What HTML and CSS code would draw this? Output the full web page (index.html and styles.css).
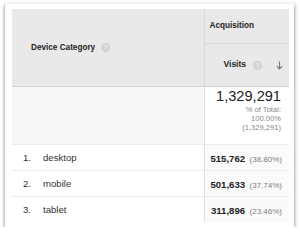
FILE: index.html
```html
<!DOCTYPE html>
<html>
<head>
<meta charset="utf-8">
<link rel="stylesheet" href="styles.css">
</head>
<body>
<div class="card">
  <table class="report">
    <colgroup><col class="c1"><col class="c2"></colgroup>
    <thead>
      <tr class="h1">
        <th class="dim" rowspan="2"><span>Device Category</span><span class="help">?</span></th>
        <th class="group">Acquisition</th>
      </tr>
      <tr class="h2">
        <th class="metric"><span class="mname">Visits</span><span class="help">?</span><svg class="sort" width="7" height="9" viewBox="0 0 7 9"><path d="M3.5 0.5V8M0.8 5.2L3.5 8L6.2 5.2" fill="none" stroke="#777" stroke-width="1.1"/></svg></th>
      </tr>
    </thead>
    <tbody>
      <tr class="total">
        <td class="blank"></td>
        <td class="tval"><div class="big">1,329,291</div><div class="small">% of Total:<br>100.00%<br>(1,329,291)</div></td>
      </tr>
      <tr class="row">
        <td class="name"><span class="idx">1.</span>desktop</td>
        <td class="val"><b>515,762</b> <span class="pct">(38.80%)</span></td>
      </tr>
      <tr class="row">
        <td class="name"><span class="idx">2.</span>mobile</td>
        <td class="val"><b>501,633</b> <span class="pct">(37.74%)</span></td>
      </tr>
      <tr class="row last">
        <td class="name"><span class="idx">3.</span>tablet</td>
        <td class="val"><b>311,896</b> <span class="pct">(23.46%)</span></td>
      </tr>
    </tbody>
  </table>
</div>
</body>
</html>
```
FILE: styles.css
```css
html, body {
  margin: 0;
  padding: 0;
  background: #fff;
}
body {
  font-family: "Liberation Sans", Arial, sans-serif;
  color: #333;
}
.card {
  margin: 3px 0 0 4px;
  width: 278px;
  padding: 5px 4px 5px 7px;
  background: #fff;
  border-left: 1px solid #cfcfcf;
  border-top: 1px solid #f2f2f2;
  box-shadow: 0 3px 3px rgba(0,0,0,0.35), 2px 0 3px rgba(0,0,0,0.12);
}
.report {
  border-collapse: collapse;
  width: 277px;
  table-layout: fixed;
}
.c1 { width: 192px; }
.c2 { width: 85px; }
.report th, .report td {
  padding: 0;
}
.report th {
  background: #e9e9e9;
  font-weight: bold;
  font-size: 8.2px;
  color: #1e1e1e;
  text-align: left;
}
.dim {
  padding-left: 19px !important;
  vertical-align: middle;
  border-right: 1px solid #d8d8d8;
  border-bottom: 1px solid #d4d4d4;
}
.help {
  display: inline-block;
  width: 9px;
  height: 9px;
  border-radius: 50%;
  background: #d2d2d2;
  color: #fff;
  font-size: 6.5px;
  line-height: 9px;
  text-align: center;
  font-weight: normal;
  margin-left: 6px;
  vertical-align: middle;
}
.h1 { height: 34px; }
.h2 { height: 43px; }
.group {
  padding-left: 5px !important;
  border-bottom: 1px solid #d8d8d8;
}
.metric {
  padding-left: 19px !important;
  border-bottom: 1px solid #d4d4d4;
  white-space: nowrap;
}
.mname { font-size: 8.5px; }
.metric .help { margin-left: 7px; }
.sort {
  margin-left: 14px;
  vertical-align: middle;
}
.total { height: 58px; }
.blank {
  background: #f7f7f7;
  border-right: 1px solid #e0e0e0;
  border-bottom: 1px solid #ececec;
}
.tval {
  text-align: right;
  vertical-align: top;
  padding: 1px 8px 0 0 !important;
  border-bottom: 1px solid #ececec;
}
.big {
  font-size: 14.6px;
  line-height: 17px;
  color: #222;
}
.small {
  font-size: 7.6px;
  line-height: 9px;
  color: #888;
}
.row { height: 26px; }
.row td {
  border-bottom: 1px solid #ececec;
  vertical-align: middle;
}
.row.last td { border-bottom: none; }
.name {
  font-size: 9.6px;
  color: #333;
  padding-left: 11px !important;
  border-right: 1px solid #e0e0e0;
}
.idx {
  display: inline-block;
  width: 20px;
}
.val {
  background: #fafafa;
  text-align: right;
  padding-right: 7px !important;
  white-space: nowrap;
}
.val b {
  font-size: 9.6px;
  color: #222;
}
.pct {
  font-size: 8px;
  color: #808080;
}
```
